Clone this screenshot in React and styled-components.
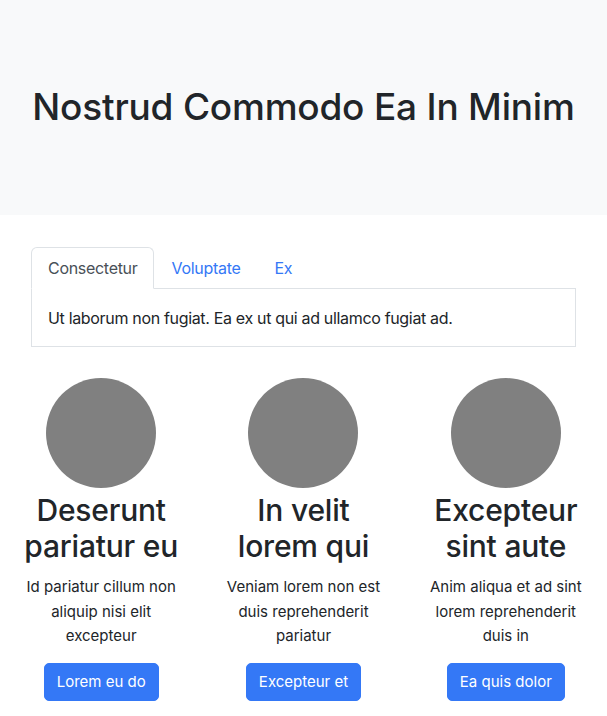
import React, { useState } from "react";
import styled, { createGlobalStyle } from "styled-components";

const Global = createGlobalStyle`
  html, body { margin: 0; padding: 0; background: #fff; }
  body {
    font-family: Inter, "Noto Sans", "Liberation Sans", sans-serif;
    font-size: 16px;
    line-height: 1.5;
    color: #212529;
  }
  * { box-sizing: border-box; }
`;

const Hero = styled.header`
  background: #f8f9fa;
  height: 215px;
  display: flex;
  align-items: center;
  justify-content: center;
`;

const Title = styled.h1`
  margin: 0;
  font-size: 37px;
  font-weight: 500;
  line-height: 1.2;
  letter-spacing: -0.2px;
  color: #212529;
`;

const Section = styled.section`
  padding: 32px 31px 0;
`;

const TabList = styled.div`
  display: flex;
  border-bottom: 1px solid #dee2e6;
`;

const Tab = styled.button`
  font: inherit;
  letter-spacing: -0.3px;
  background: ${(p) => (p.$active ? "#fff" : "transparent")};
  color: ${(p) => (p.$active ? "#495057" : "#3478f6")};
  border: 1px solid ${(p) => (p.$active ? "#dee2e6" : "transparent")};
  border-bottom-color: ${(p) => (p.$active ? "#fff" : "transparent")};
  border-radius: 6px 6px 0 0;
  padding: 8px 16px;
  margin-bottom: -1px;
  line-height: 24px;
  cursor: pointer;
`;

const Panel = styled.div`
  border: 1px solid #dee2e6;
  border-top: none;
  padding: 17px 16px 16px;
  line-height: 24px;
  letter-spacing: -0.33px;
`;

const Cards = styled.div`
  display: grid;
  grid-template-columns: repeat(3, 1fr);
  margin-top: 31px;
`;

const Card = styled.div`
  display: flex;
  flex-direction: column;
  align-items: center;
  text-align: center;
  padding: 0 24px;
`;

const Circle = styled.div`
  width: 110px;
  height: 110px;
  border-radius: 50%;
  background: #808080;
`;

const CardTitle = styled.h2`
  margin: 4px 0 11px;
  font-size: 30px;
  font-weight: 500;
  line-height: 36px;
  letter-spacing: -0.2px;
`;

const CardText = styled.p`
  margin: 0 0 14px;
  font-size: 15px;
  line-height: 24.5px;
`;

const Button = styled.button`
  font: inherit;
  font-size: 15px;
  color: #fff;
  background: #3478f6;
  border: 1px solid #3478f6;
  border-radius: 5px;
  padding: 6px 12px;
  line-height: 24px;
  cursor: pointer;
`;

const tabs = ["Consectetur", "Voluptate", "Ex"];
const cards = [
  { title: "Deserunt pariatur eu", text: "Id pariatur cillum non aliquip nisi elit excepteur", btn: "Lorem eu do" },
  { title: "In velit lorem qui", text: "Veniam lorem non est duis reprehenderit pariatur", btn: "Excepteur et" },
  { title: "Excepteur sint aute", text: "Anim aliqua et ad sint lorem reprehenderit duis in", btn: "Ea quis dolor" },
];

export default function App() {
  const [active, setActive] = useState(0);
  return (
    <>
      <Global />
      <Hero>
        <Title>Nostrud Commodo Ea In Minim</Title>
      </Hero>
      <Section>
        <TabList>
          {tabs.map((t, i) => (
            <Tab key={t} $active={i === active} onClick={() => setActive(i)}>
              {t}
            </Tab>
          ))}
        </TabList>
        <Panel>Ut laborum non fugiat. Ea ex ut qui ad ullamco fugiat ad.</Panel>
      </Section>
      <Cards>
        {cards.map((c) => (
          <Card key={c.title}>
            <Circle />
            <CardTitle>{c.title}</CardTitle>
            <CardText>{c.text}</CardText>
            <Button>{c.btn}</Button>
          </Card>
        ))}
      </Cards>
    </>
  );
}
